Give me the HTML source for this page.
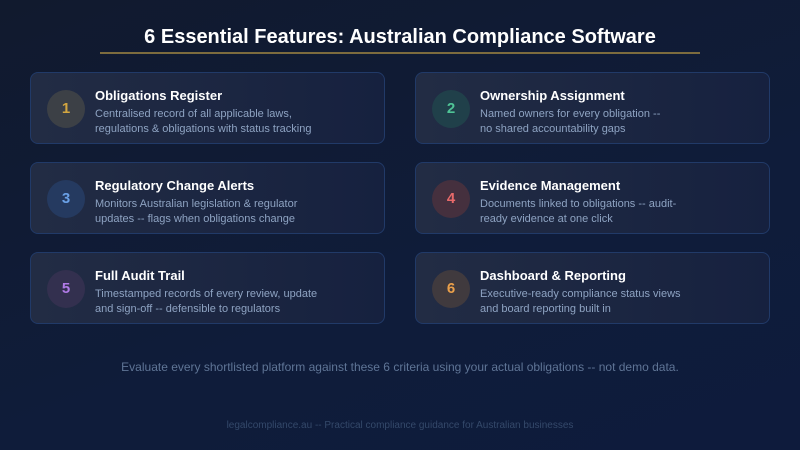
<!DOCTYPE html>
<html><head><style>
*{margin:0;padding:0;box-sizing:border-box}
body{width:800px;height:450px;overflow:hidden;font-family:"Liberation Sans",sans-serif;background:linear-gradient(160deg,#111a2e 0%,#0f1c3a 60%,#0e1b3c 100%);position:relative}
h1{position:absolute;top:26px;left:0;width:800px;text-align:center;color:#fff;font-size:20px;font-weight:bold}
.line{position:absolute;left:100px;top:52px;width:600px;height:2px;background:#7d6c3e}
.card{position:absolute;width:355px;height:72px;border:1px solid #213a68;border-radius:8px;background:linear-gradient(90deg,#222c44,#16213f)}
.c{position:absolute;left:16px;top:17px;width:38px;height:38px;border-radius:50%;text-align:center;line-height:38px;font-size:15px;font-weight:bold}
.t{position:absolute;left:64px;top:15px;color:#fff;font-size:13px;font-weight:bold}
.d{position:absolute;left:64px;top:34px;color:#8ea3c2;font-size:11px;line-height:15px}
.foot1{position:absolute;top:360px;width:800px;text-align:center;color:#5f7596;font-size:12px}
.foot2{position:absolute;top:420px;width:800px;text-align:center;color:#34496a;font-size:10px}
</style></head><body>
<h1>6 Essential Features: Australian Compliance Software</h1>
<div class="line"></div>
<div class="card" style="left:30px;top:72px"><div class="c" style="background:#3c4046;color:#d3a640">1</div><div class="t">Obligations Register</div><div class="d">Centralised record of all applicable laws,<br>regulations &amp; obligations with status tracking</div></div>
<div class="card" style="left:415px;top:72px"><div class="c" style="background:#20404a;color:#4fc496">2</div><div class="t">Ownership Assignment</div><div class="d">Named owners for every obligation --<br>no shared accountability gaps</div></div>
<div class="card" style="left:30px;top:162px"><div class="c" style="background:#253a60;color:#6aa0e6">3</div><div class="t">Regulatory Change Alerts</div><div class="d">Monitors Australian legislation &amp; regulator<br>updates -- flags when obligations change</div></div>
<div class="card" style="left:415px;top:162px"><div class="c" style="background:#45303e;color:#e86a6a">4</div><div class="t">Evidence Management</div><div class="d">Documents linked to obligations -- audit-<br>ready evidence at one click</div></div>
<div class="card" style="left:30px;top:252px"><div class="c" style="background:#33304f;color:#b07ae6">5</div><div class="t">Full Audit Trail</div><div class="d">Timestamped records of every review, update<br>and sign-off -- defensible to regulators</div></div>
<div class="card" style="left:415px;top:252px"><div class="c" style="background:#403a3e;color:#eba04a">6</div><div class="t">Dashboard &amp; Reporting</div><div class="d">Executive-ready compliance status views<br>and board reporting built in</div></div>
<div class="foot1">Evaluate every shortlisted platform against these 6 criteria using your actual obligations -- not demo data.</div>
<div class="foot2">legalcompliance.au -- Practical compliance guidance for Australian businesses</div>
</body></html>
